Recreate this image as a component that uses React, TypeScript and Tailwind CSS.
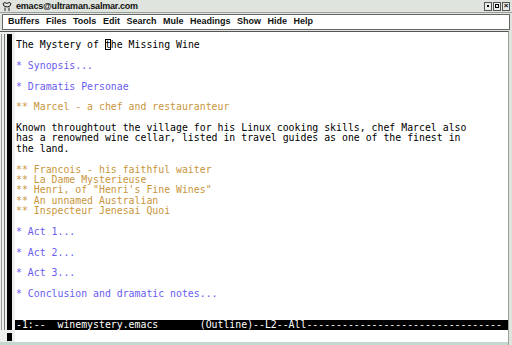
import React from 'react';

type Line = { text: string; kind?: 'h1' | 'h2' | 'body' };

const lines: Line[] = [
  { text: 'The Mystery of the Missing Wine', kind: 'body' },
  { text: '' },
  { text: '* Synopsis...', kind: 'h1' },
  { text: '' },
  { text: '* Dramatis Personae', kind: 'h1' },
  { text: '' },
  { text: '** Marcel - a chef and restauranteur', kind: 'h2' },
  { text: '' },
  { text: 'Known throughtout the village for his Linux cooking skills, chef Marcel also', kind: 'body' },
  { text: 'has a renowned wine cellar, listed in travel guides as one of the finest in', kind: 'body' },
  { text: 'the land.', kind: 'body' },
  { text: '' },
  { text: '** Francois - his faithful waiter', kind: 'h2' },
  { text: '** La Dame Mysterieuse', kind: 'h2' },
  { text: '** Henri, of "Henri\'s Fine Wines"', kind: 'h2' },
  { text: '** An unnamed Australian', kind: 'h2' },
  { text: '** Inspecteur Jenesai Quoi', kind: 'h2' },
  { text: '' },
  { text: '* Act 1...', kind: 'h1' },
  { text: '' },
  { text: '* Act 2...', kind: 'h1' },
  { text: '' },
  { text: '* Act 3...', kind: 'h1' },
  { text: '' },
  { text: '* Conclusion and dramatic notes...', kind: 'h1' },
];

const color = {
  h1: 'text-[#6a5cf0]',
  h2: 'text-[#c8963c]',
  body: 'text-black',
};

const menus = ['Buffers', 'Files', 'Tools', 'Edit', 'Search', 'Mule', 'Headings', 'Show', 'Hide', 'Help'];

function TitleIcon() {
  return (
    <svg width="12" height="11" viewBox="0 0 12 11" className="shrink-0">
      <path d="M2 2.5 Q4 0.5 6 2.5 Q8 0.5 10 2.5 L9 5 Q6 7 3 5 Z" fill="none" stroke="#222" strokeWidth="1" />
      <path d="M4 6.5 L4 10 M8 6.5 L8 10" stroke="#222" strokeWidth="1" />
    </svg>
  );
}

function WinButton({ children }: { children: React.ReactNode }) {
  return (
    <div className="w-[8px] h-[9px] border border-[#555] bg-[#e8ece8] flex items-center justify-center">
      {children}
    </div>
  );
}

export default function App() {
  return (
    <div className="w-[512px] h-[345px] bg-[#dfe4df] flex flex-col overflow-hidden [font-family:'DejaVu_Sans_Mono',monospace]">
      {/* title bar */}
      <div className="h-[13px] flex items-center pl-[1px] pr-[2px] border-b border-[#9aa09a]">
        <TitleIcon />
        <span className="ml-[3px] text-[9px] leading-none font-bold text-[#111] tracking-[-0.2px] [font-family:'Liberation_Sans',sans-serif]">
          emacs@ultraman.salmar.com
        </span>
        <div className="ml-auto flex gap-[1px]">
          <WinButton><div className="w-[2px] h-[2px] bg-black" /></WinButton>
          <WinButton><div className="w-[4px] h-[4px] border border-black" /></WinButton>
          <WinButton><span className="text-[8px] leading-none font-bold text-black [font-family:'Liberation_Sans',sans-serif]">×</span></WinButton>
        </div>
      </div>

      {/* menu bar */}
      <div className="mx-[2px] mt-[1px] h-[16px] bg-white border border-[#666] flex items-center gap-[6.5px] pl-[5px] text-[9px] font-bold text-[#111] [font-family:'Liberation_Sans',sans-serif]">
        {menus.map((m) => (
          <span key={m}>{m}</span>
        ))}
      </div>

      {/* frame */}
      <div className="flex-1 flex mt-[1px] border-t border-[#555] bg-white mr-[3px] border-r border-r-[#9aa09a]">
        {/* scrollbar gutter */}
        <div className="w-[15px] shrink-0 flex flex-col bg-[#eef0ee]">
          <div className="flex-1 flex pt-[2px] pb-[1px]">
            <div className="w-[1px] ml-[1px] bg-[#999]" />
            <div className="w-[1px] ml-[2px] bg-[#777]" />
            <div className="w-[5px] ml-[2px] bg-black" />
          </div>
          <div className="h-[11px] flex items-end pb-[1px] pl-[7px]">
            <div className="w-[5px] h-[8px] bg-black" />
          </div>
          <div className="h-[3px] bg-[#c5d8cf]" />
        </div>

        {/* text + modeline */}
        <div className="flex-1 min-w-0 flex flex-col text-[9.85px] leading-[10.375px] whitespace-pre">
          <div className="flex-1 pt-[8px] pl-[1px]">
            {lines.map((l, i) => (
              <div key={i} className={`h-[10.375px] ${l.kind ? color[l.kind] : ''}`}>
                {i === 0 ? (
                  <>
                    The Mystery of <span className="outline outline-1 outline-black -outline-offset-1">t</span>he Missing Wine
                  </>
                ) : (
                  l.text || ' '
                )}
              </div>
            ))}
          </div>
          <div className="h-[10px] bg-black text-white pl-[1px] leading-[10px] overflow-hidden">
            {'-1:--  winemystery.emacs       (Outline)--L2--All' + '-'.repeat(33)}
          </div>
          <div className="h-[12px] bg-white" />
          <div className="h-[3px] bg-[#c5d8cf]" />
        </div>
      </div>
    </div>
  );
}
